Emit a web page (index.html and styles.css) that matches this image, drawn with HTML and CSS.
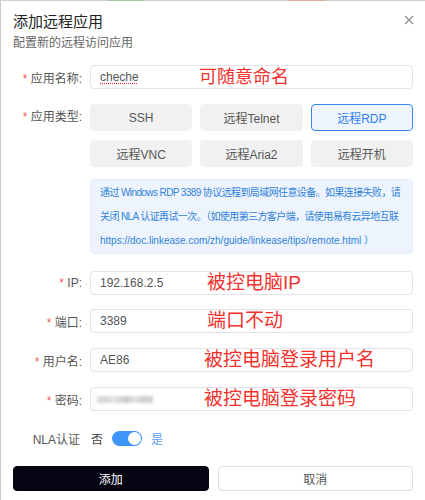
FILE: index.html
```html
<!DOCTYPE html>
<html lang="zh-CN">
<head>
  <meta charset="UTF-8">
  <meta name="viewport" content="width=device-width, initial-scale=1.0">
  <title>添加远程应用</title>
  <link rel="stylesheet" href="styles.css">
</head>
<body>
  <div class="backdrop-strip"></div>
  <div class="modal">
    <div class="modal-header">
      <h1>添加远程应用</h1>
      <p class="subtitle">配置新的远程访问应用</p>
      <button class="close-btn" aria-label="关闭">
        <svg width="10" height="10" viewBox="0 0 10 10"><path d="M1 1 L9 9 M9 1 L1 9" stroke="#8a8a8a" stroke-width="1.1" fill="none"/></svg>
      </button>
    </div>

    <div class="form-row row-name">
      <label class="label"><span class="req">*</span> 应用名称:</label>
      <div class="field">
        <span class="value spell">cheche</span>
        <span class="note note-name">可随意命名</span>
      </div>
    </div>

    <div class="form-row row-type">
      <label class="label type-label"><span class="req">*</span> 应用类型:</label>
      <div class="type-col">
        <div class="type-grid">
          <button class="type-btn">SSH</button>
          <button class="type-btn">远程Telnet</button>
          <button class="type-btn active">远程RDP</button>
          <button class="type-btn">远程VNC</button>
          <button class="type-btn">远程Aria2</button>
          <button class="type-btn">远程开机</button>
        </div>
        <div class="info">
          <div class="tight">通过 Windows RDP 3389 协议远程到局域网任意设备。如果连接失败，请</div>
          <div class="tight">关闭 NLA 认证再试一次。（如使用第三方客户端，请使用易有云异地互联</div>
          <div>https://doc.linkease.com/zh/guide/linkease/tips/remote.html ）</div>
        </div>
      </div>
    </div>

    <div class="form-row row-ip">
      <label class="label"><span class="req">*</span> IP:</label>
      <div class="field">
        <span class="value">192.168.2.5</span>
        <span class="note note-ip">被控电脑IP</span>
      </div>
    </div>

    <div class="form-row row-port">
      <label class="label"><span class="req">*</span> 端口:</label>
      <div class="field">
        <span class="value">3389</span>
        <span class="note note-ip">端口不动</span>
      </div>
    </div>

    <div class="form-row row-user">
      <label class="label"><span class="req">*</span> 用户名:</label>
      <div class="field">
        <span class="value">AE86</span>
        <span class="note note-user">被控电脑登录用户名</span>
      </div>
    </div>

    <div class="form-row row-pass">
      <label class="label"><span class="req">*</span> 密码:</label>
      <div class="field">
        <span class="blurred"></span>
        <span class="note note-user">被控电脑登录密码</span>
      </div>
    </div>

    <div class="form-row row-nla">
      <label class="label nla-label">NLA认证</label>
      <div class="switch-wrap">
        <span class="off-text">否</span>
        <span class="switch"><span class="knob"></span></span>
        <span class="on-text">是</span>
      </div>
    </div>

    <div class="actions">
      <button class="btn-primary">添加</button>
      <button class="btn-cancel">取消</button>
    </div>
  </div>
</body>
</html>
```

FILE: styles.css
```css
* {
  box-sizing: border-box;
}

body {
  margin: 0;
  background: #fff;
  font-family: "Liberation Sans", "Noto Sans CJK SC", sans-serif;
  color: #555;
  width: 425px;
  height: 500px;
  overflow: hidden;
  border-left: 1px solid #c9c9c9;
}

.backdrop-strip {
  height: 1px;
  background: linear-gradient(to right, #cfcfcf 0, #cfcfcf 107px, #9fc7a0 107px, #9fc7a0 143px, #cfcfcf 143px, #cfcfcf 287px, #e3b09a 287px, #e3b09a 325px, #cfcfcf 325px);
}

.modal {
  padding: 11px 12px 0 12px;
}

.modal-header {
  position: relative;
}

.modal-header h1 {
  margin: 0;
  font-size: 15px;
  font-weight: normal;
  line-height: 20px;
  color: #222;
}

.subtitle {
  margin: 3px 0 0;
  font-size: 12px;
  line-height: 16px;
  color: #666;
}

.close-btn {
  position: absolute;
  top: 1px;
  right: -2px;
  border: none;
  background: none;
  padding: 0;
  width: 12px;
  height: 12px;
}

.form-row {
  display: grid;
  grid-template-columns: 69px minmax(0, 1fr);
  column-gap: 8px;
  align-items: center;
}

.label {
  text-align: right;
  font-size: 12px;
  color: #555;
  white-space: nowrap;
}

.req {
  color: #f25b5b;
}

.field {
  position: relative;
  height: 24px;
  border: 1px solid #e2e2e8;
  border-radius: 4px;
  padding: 0 9px;
  display: flex;
  align-items: center;
  font-size: 12px;
  color: #555;
}

.spell {
  text-decoration: underline dotted #e34;
  text-underline-offset: 2px;
}

.note {
  position: absolute;
  top: 50%;
  transform: translateY(-50%);
  color: #f3322d;
  font-size: 19px;
  line-height: 24px;
  white-space: nowrap;
}

.note-name {
  left: 108px;
  font-size: 18px;
}

.note-ip {
  left: 116px;
}

.note-user {
  left: 113px;
}

.blurred {
  display: inline-block;
  width: 56px;
  height: 7px;
  margin-left: -3px;
  background: linear-gradient(to right, #d8d8d8 0, #d8d8d8 14px, #e7e7e7 14px, #c9c9c9 30px, #e4e4e4 38px, #cfcfcf 44px, #d2d2d2 56px);
  filter: blur(1.6px);
}

.row-name {
  margin-top: 14px;
}

.row-type {
  margin-top: 15px;
  align-items: start;
}

.type-col {
  min-width: 0;
}

.type-label {
  line-height: 27px;
}

.type-grid {
  display: grid;
  grid-template-columns: repeat(3, minmax(0, 1fr));
  column-gap: 8px;
  row-gap: 9px;
}

.type-btn {
  height: 27px;
  border: 1px solid #f1f1f1;
  border-radius: 4px;
  background: #f1f1f1;
  color: #555;
  font-family: inherit;
  font-size: 12px;
  padding: 0;
}

.type-btn.active {
  background: #eef5ff;
  border-color: #3a86f0;
  color: #2f7ff0;
}

.info {
  margin-top: 12px;
  background: #edf4fd;
  border: 1px solid #e3edfa;
  border-radius: 4px;
  padding: 0.5px 9px;
  font-size: 10px;
  line-height: 24px;
  color: #2f82db;
  white-space: nowrap;
}

.tight {
  letter-spacing: -0.6px;
}

.row-ip {
  margin-top: 17px;
}

.row-port {
  margin-top: 14px;
}

.row-user,
.row-pass {
  margin-top: 15px;
}

.row-nla {
  margin-top: 19px;
}

.nla-label {
  padding-right: 2px;
}

.switch-wrap {
  display: flex;
  align-items: center;
  font-size: 12px;
}

.off-text {
  color: #444;
  margin-left: 1px;
}

.switch {
  position: relative;
  width: 30px;
  height: 15px;
  border-radius: 8px;
  background: #3d95f8;
  margin: 0 9px 0 9px;
}

.knob {
  position: absolute;
  right: 1px;
  top: 1px;
  width: 13px;
  height: 13px;
  border-radius: 50%;
  background: #fff;
}

.on-text {
  color: #5ba3f5;
}

.actions {
  display: grid;
  grid-template-columns: 1fr 1fr;
  column-gap: 9px;
  margin-top: 19px;
}

.actions button {
  height: 25px;
  border-radius: 4px;
  font-family: inherit;
  font-size: 12px;
}

.btn-primary {
  background: #060312;
  border: 1px solid #060312;
  color: #fff;
}

.btn-cancel {
  background: #fff;
  border: 1px solid #dedee3;
  color: #555;
}
```
